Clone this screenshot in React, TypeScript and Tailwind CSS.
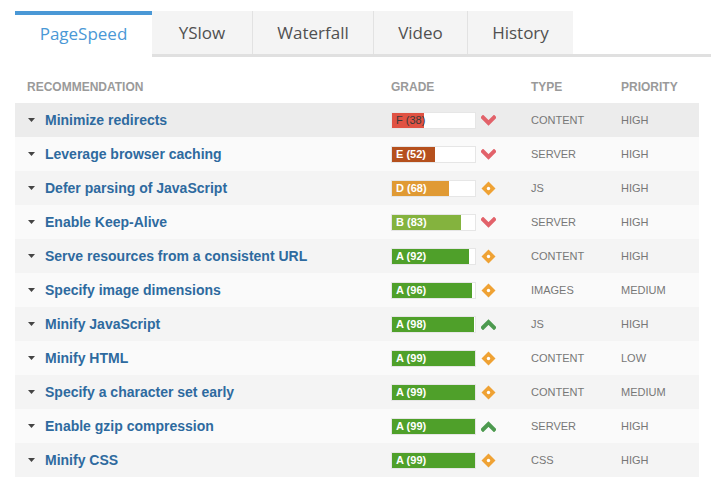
import React from "react";

type Row = {
  name: string;
  grade: string;
  score: number;
  icon: "down" | "diamond" | "up";
  type: string;
  priority: string;
};

const rows: Row[] = [
  { name: "Minimize redirects", grade: "F", score: 38, icon: "down", type: "CONTENT", priority: "HIGH" },
  { name: "Leverage browser caching", grade: "E", score: 52, icon: "down", type: "SERVER", priority: "HIGH" },
  { name: "Defer parsing of JavaScript", grade: "D", score: 68, icon: "diamond", type: "JS", priority: "HIGH" },
  { name: "Enable Keep-Alive", grade: "B", score: 83, icon: "down", type: "SERVER", priority: "HIGH" },
  { name: "Serve resources from a consistent URL", grade: "A", score: 92, icon: "diamond", type: "CONTENT", priority: "HIGH" },
  { name: "Specify image dimensions", grade: "A", score: 96, icon: "diamond", type: "IMAGES", priority: "MEDIUM" },
  { name: "Minify JavaScript", grade: "A", score: 98, icon: "up", type: "JS", priority: "HIGH" },
  { name: "Minify HTML", grade: "A", score: 99, icon: "diamond", type: "CONTENT", priority: "LOW" },
  { name: "Specify a character set early", grade: "A", score: 99, icon: "diamond", type: "CONTENT", priority: "MEDIUM" },
  { name: "Enable gzip compression", grade: "A", score: 99, icon: "up", type: "SERVER", priority: "HIGH" },
  { name: "Minify CSS", grade: "A", score: 99, icon: "diamond", type: "CSS", priority: "HIGH" },
];

const gradeColor: Record<string, string> = {
  F: "bg-[#e05243]",
  E: "bg-[#b5501d]",
  D: "bg-[#e09a34]",
  B: "bg-[#84b33e]",
  A: "bg-[#4fa02a]",
};

function Icon({ kind }: { kind: Row["icon"] }) {
  if (kind === "down")
    return (
      <svg width="15" height="11" viewBox="0 0 15 11">
        <polyline points="2,2.5 7.5,8 13,2.5" fill="none" stroke="#e2626a" strokeWidth="4" strokeLinecap="square" />
      </svg>
    );
  if (kind === "up")
    return (
      <svg width="15" height="11" viewBox="0 0 15 11">
        <polyline points="2,8.5 7.5,3 13,8.5" fill="none" stroke="#4d9a4f" strokeWidth="4" strokeLinecap="square" />
      </svg>
    );
  return (
    <svg width="15" height="15" viewBox="0 0 15 15">
      <polygon points="7.5,0.5 14.5,7.5 7.5,14.5 0.5,7.5" fill="#efa234" />
      <circle cx="7.5" cy="7.5" r="1.7" fill="#ffffff" />
    </svg>
  );
}

const tabs = [
  { label: "YSlow", w: "w-[100px]" },
  { label: "Waterfall", w: "w-[121px]" },
  { label: "Video", w: "w-[94px]" },
  { label: "History", w: "w-[106px]" },
];

export default function App() {
  return (
    <div className="w-[711px] h-[481px] bg-white overflow-hidden">
      {/* Tabs */}
      <div className="pt-[11px] pl-[15px]">
        <div className="flex border-b-[3px] border-[#e0e0e0] h-[46px]" style={{ fontFamily: '"Open Sans", sans-serif' }}>
          <div className="w-[137px] h-[46px] bg-white border-t-[4px] border-[#4a98d6] flex items-center justify-center text-[17px] text-[#4a98d6] pb-[4px]">
            PageSpeed
          </div>
          {tabs.map((t, i) => (
            <div
              key={t.label}
              className={`${t.w} h-[43px] bg-[#f4f4f4] flex items-center justify-center text-[17px] text-[#505050] ${i > 0 ? "border-l border-[#e2e2e2]" : ""}`}
            >
              {t.label}
            </div>
          ))}
        </div>
      </div>

      {/* Table */}
      <div className="pl-[15px] w-[699px]" style={{ fontFamily: '"Liberation Sans", Arial, sans-serif' }}>
        <div className="flex h-[46px] pt-[23px] text-[12px] leading-[14px] font-bold text-[#9a9a9a]">
          <div className="w-[376px] pl-[12px]">RECOMMENDATION</div>
          <div className="w-[140px]">GRADE</div>
          <div className="w-[90px]">TYPE</div>
          <div>PRIORITY</div>
        </div>
        {rows.map((r, i) => (
          <div
            key={r.name}
            className={`flex items-center h-[34px] ${i === 0 ? "bg-[#ececec]" : i % 2 === 0 ? "bg-[#f4f4f4]" : "bg-[#fafafa]"}`}
          >
            <div className="w-[376px] flex items-center pl-[13px]">
              <svg width="7" height="4" viewBox="0 0 7 4" className="mr-[10px]">
                <polygon points="0,0 7,0 3.5,4" fill="#444444" />
              </svg>
              <span className="text-[14px] font-bold text-[#2e6a9f]">{r.name}</span>
            </div>
            <div className="w-[140px] flex items-center">
              <div className="w-[85px] h-[17px] bg-white border border-[#e6e6e6] flex">
                <div
                  className={`${gradeColor[r.grade]} h-full flex items-center pl-[4px] text-[11px] font-bold whitespace-nowrap ${r.grade === "F" ? "text-[#3a3a3a] font-normal" : "text-white"}`}
                  style={{ width: `${Math.round(r.score * 0.835)}px` }}
                >
                  {r.grade} ({r.score})
                </div>
              </div>
              <div className="ml-[5px] flex items-center">
                <Icon kind={r.icon} />
              </div>
            </div>
            <div className="w-[90px] text-[11px] text-[#777777]">{r.type}</div>
            <div className="text-[11px] text-[#777777]">{r.priority}</div>
          </div>
        ))}
      </div>
    </div>
  );
}
